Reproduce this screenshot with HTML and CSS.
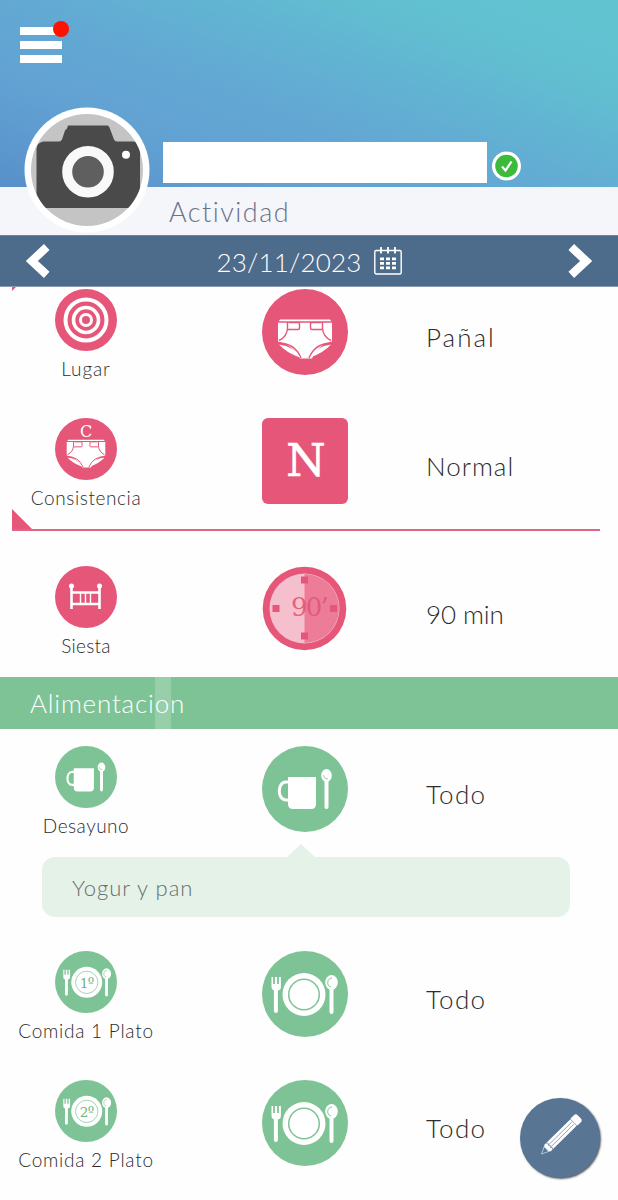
FILE: index.html
```html
<!DOCTYPE html>
<html lang="es">

<head>
  <meta charset="UTF-8">
  <meta name="viewport" content="width=device-width, initial-scale=1.0">
  <title>Actividad</title>
  <link rel="stylesheet" href="styles.css">
</head>

<body>
  <!-- shared shapes -->
  <svg width="0" height="0" class="defs">
    <symbol id="diaper" viewBox="0 0 56 42">
      <path fill="#fff" d="M3 1h50l2 3v19C45 25 39 31 35 40H23C18 31 11 25 1 23V4z" />
      <path fill="none" stroke="#e65679" stroke-width="1.4" d="M1 3.500h54M10.500 4v6Q10 18 2 22M45.500 4v6Q46 18 54 22M12 4h9q1.500 0 1.500 1.500v4Q22.500 11 21 11H11M44 4h-9q-1.500 0-1.500 1.500v4Q33.500 11 35 11h10M1 24.500q17 0 23 15M55 24.500q-17 0-23 15" />
      <path fill="#fff" d="M2 26q15 2 21 13Q9 34 2 26zM54 26q-15 2-21 13 14-5 21-13z" />
    </symbol>
    <symbol id="cup" viewBox="0 0 86 86">
      <path fill="#fff" d="M26 31h28v27q0 5-5 5H31q-5 0-5-5z" />
      <path fill="none" stroke="#fff" stroke-width="3" d="M27 36h-3c-9 0-9 18 0 18h3" />
      <ellipse cx="64.500" cy="29.500" rx="5.300" ry="6.500" fill="#fff" />
      <path stroke="#fff" stroke-width="4" stroke-linecap="round" d="M64.500 35v26" />
      <path fill="none" stroke="#7ec395" stroke-width=".8" d="M61 29q1 4 5 4" />
    </symbol>
    <symbol id="plate" viewBox="0 0 86 86">
      <circle cx="42" cy="43.500" r="21.500" fill="#fff" />
      <path fill="#fff" d="M9.500 26h1.600v7h1.800v-7h2.200v7h1.800v-7h2v10q0 3-3 3.500V60q0 2-2 2t-2-2V39.500q-2.400-.5-2.400-3.500z" />
      <ellipse cx="69.500" cy="31.500" rx="6.300" ry="7.500" fill="#fff" />
      <path stroke="#fff" stroke-width="4" stroke-linecap="round" d="M69.500 38v23" />
      <path fill="none" stroke="#7ec395" stroke-width="1" d="M70 27c-5 0-6 8-1 9" />
    </symbol>
  </svg>

  <header class="cabecera">
    <button class="menu" aria-label="Menú">
      <span></span><span></span><span></span>
      <i class="aviso"></i>
    </button>
    <div class="perfil">
      <div class="nombre"></div>
      <svg class="check" viewBox="0 0 30 30">
        <circle cx="15.500" cy="15" r="14.500" fill="#fff" />
        <circle cx="15.500" cy="15" r="11.300" fill="#3cba3a" />
        <path d="M11 15.500l3.500 4L20.500 10.500" fill="none" stroke="#fff" stroke-width="2.200" />
      </svg>
    </div>
    <svg class="avatar" viewBox="0 0 126 126">
      <clipPath id="foto"><circle cx="63" cy="63" r="56" /></clipPath>
      <circle cx="63" cy="63" r="62.500" fill="#fff" />
      <g clip-path="url(#foto)">
        <path fill="#c4c4c4" d="M0 0h126v126H0z" />
        <path fill="#4a4a4a" d="M44 18.500h40l1.500 2 4.500 12q1 2 3 2h17q6 1 6 7v59.500H12.500V42.500q0-7 7-8H35q2 0 3-2l3-9 2-2z" />
      </g>
      <circle cx="64" cy="64.800" r="20.800" fill="#5f5f5f" stroke="#f9f9f9" stroke-width="10" />
      <circle cx="102" cy="47.800" r="4" fill="#fff" />
    </svg>
  </header>

  <div class="pestana">Actividad</div>

  <nav class="fecha">
    <svg class="flecha" viewBox="0 0 23 34"><path d="M20 3L5.500 16.500 20 30" fill="none" stroke="#fff" stroke-width="8" /></svg>
    <div class="dia">
      <span>23/11/2023</span>
      <svg class="calendario" viewBox="0 0 28 28">
        <rect x=".8" y="3.500" width="26.400" height="23.500" rx="1.500" fill="none" stroke="#fff" stroke-width="1.400" />
        <path stroke="#fff" stroke-width="1.800" d="M7 0v6.500M14 0v6.500M21 0v6.500" />
        <path stroke="#fff" stroke-width="2.800" stroke-dasharray="4 2" d="M6 11.800h16M6 16.300h16M6 20.800h16" />
      </svg>
    </div>
    <svg class="flecha" viewBox="0 0 23 34"><path d="M3 3l14.500 13.500L3 30" fill="none" stroke="#fff" stroke-width="8" /></svg>
  </nav>

  <main>
    <section class="grupo">
      <i class="esquina"></i>
      <div class="fila">
        <div class="tipo">
          <svg class="icono" viewBox="0 0 62 62">
            <circle cx="31" cy="31" r="31" fill="#e65679" />
            <g fill="none" stroke="#fff">
              <circle cx="31" cy="31" r="20.500" stroke-width="4" />
              <circle cx="31" cy="31" r="12.500" stroke-width="3.600" />
              <circle cx="31" cy="31" r="5.500" stroke-width="3" />
            </g>
          </svg>
          <span class="lugar">Lugar</span>
        </div>
        <svg class="grande" viewBox="0 0 86 86">
          <circle cx="43" cy="43" r="43" fill="#e65679" />
          <use href="#diaper" x="15" y="29.500" width="56" height="42" />
        </svg>
        <div class="valor panal">Pañal</div>
      </div>
      <div class="fila">
        <div class="tipo">
          <svg class="icono" viewBox="0 0 62 62">
            <circle cx="31" cy="31" r="31" fill="#e65679" />
            <text x="31" y="19" class="letra-c">C</text>
            <use href="#diaper" x="11" y="21" width="40" height="30" />
          </svg>
          <span class="consistencia">Consistencia</span>
        </div>
        <svg class="grande" viewBox="0 0 86 86">
          <rect width="86" height="86" rx="6" fill="#e65679" />
          <text x="44" y="58" class="letra-n">N</text>
        </svg>
        <div class="valor normal">Normal</div>
      </div>
    </section>

    <section class="siesta">
      <div class="fila">
        <div class="tipo">
          <svg class="icono" viewBox="0 0 62 62">
            <circle cx="31" cy="31" r="31" fill="#e65679" />
            <path fill="none" stroke="#fff" stroke-width="2.600" d="M16.500 20v23M44.500 20v23M16 26.500h29M16 38h29" />
            <path stroke="#fff" stroke-width="1.400" d="M25.500 26v12M30.500 26v12M35.500 26v12" />
            <circle cx="16.500" cy="20" r="2.500" fill="#fff" />
            <circle cx="44.500" cy="20" r="2.500" fill="#fff" />
          </svg>
          <span class="nombre-siesta">Siesta</span>
        </div>
        <svg class="grande" viewBox="0 0 86 86">
          <circle cx="42.500" cy="42.500" r="41.800" fill="#e65679" />
          <circle cx="42.500" cy="42.500" r="35" fill="#f6bfce" />
          <path fill="#ed7c98" d="M42.500 8a34.500 34.500 0 010 69z" />
          <path fill="#e65679" d="M39 10.500h7v7h-7zM39 66.500h7v7h-7zM10.500 39h7v7h-7zM68 39h7v7h-7z" />
          <text x="29" y="50" class="minutos">90’</text>
        </svg>
        <div class="valor noventa">90 min</div>
      </div>
    </section>

    <h2 class="titulo">Alimentacion</h2>

    <section class="comidas">
      <div class="fila">
        <div class="tipo">
          <svg class="icono" viewBox="0 0 86 86">
            <circle cx="43" cy="43" r="43" fill="#7ec395" />
            <use href="#cup" width="86" height="86" />
          </svg>
          <span class="desayuno">Desayuno</span>
        </div>
        <svg class="grande" viewBox="0 0 86 86">
          <circle cx="43" cy="43" r="43" fill="#7ec395" />
          <use href="#cup" width="86" height="86" />
        </svg>
        <div class="valor todo">Todo</div>
      </div>
      <div class="nota">Yogur y pan</div>
      <div class="fila">
        <div class="tipo">
          <svg class="icono" viewBox="0 0 86 86">
            <circle cx="43" cy="43" r="43" fill="#7ec395" />
            <use href="#plate" x="2" width="86" height="86" />
            <circle cx="44" cy="43.500" r="15.500" class="borde-fino" />
            <text x="44" y="51" class="plato">1º</text>
          </svg>
          <span class="comida">Comida 1 Plato</span>
        </div>
        <svg class="grande" viewBox="0 0 86 86">
          <circle cx="43" cy="43" r="43" fill="#7ec395" />
          <use href="#plate" width="86" height="86" />
          <circle cx="42" cy="43.500" r="15.300" class="borde" />
        </svg>
        <div class="valor todo">Todo</div>
      </div>
      <div class="fila">
        <div class="tipo">
          <svg class="icono" viewBox="0 0 86 86">
            <circle cx="43" cy="43" r="43" fill="#7ec395" />
            <use href="#plate" x="2" width="86" height="86" />
            <circle cx="44" cy="43.500" r="15.500" class="borde-fino" />
            <text x="44" y="51" class="plato">2º</text>
          </svg>
          <span class="comida">Comida 2 Plato</span>
        </div>
        <svg class="grande" viewBox="0 0 86 86">
          <circle cx="43" cy="43" r="43" fill="#7ec395" />
          <use href="#plate" width="86" height="86" />
          <circle cx="42" cy="43.500" r="15.300" class="borde" />
        </svg>
        <div class="valor todo">Todo</div>
      </div>
    </section>
  </main>

  <button class="editar" aria-label="Editar">
    <svg viewBox="0 0 80 80">
      <g transform="translate(21.500 56) rotate(-44.500)">
        <path fill="#fff" d="M8.500-4.500H46v9H8.500L5 2V-2z" />
        <rect x="44" y="-5" width="9" height="10" rx="3" fill="#fff" />
        <path fill="#587593" stroke="#c9d5e0" stroke-width=".8" d="M0 0l7-3.300v6.600z" />
        <path fill="none" stroke="#587593" stroke-width=".6" d="M11-1.500h33M11 1.500h33M45-5v10M11-4.500q2.500 1.500 0 3 2.500 1.500 0 3 2.500 1.500 0 3" />
      </g>
    </svg>
  </button>
</body>

</html>
```
FILE: styles.css
```css
* {
  box-sizing: border-box;
}

body {
  margin: 0;
  height: 1200px;
  position: relative;
  overflow: hidden;
  background-color: #fefefe;
  font-family: Lato, "Open Sans", sans-serif;
  font-weight: 300;
  color: #2c2c2c;
}

svg {
  display: block;
  flex: none;
}

.defs {
  position: absolute;
}

button {
  border: none;
  padding: 0;
  background: none;
  cursor: pointer;
}

/* Cabecera */
.cabecera {
  position: relative;
  height: 187px;
  padding: 27px 20px 4px;
  display: flex;
  flex-direction: column;
  justify-content: space-between;
  background: linear-gradient(200deg, #61c3d0 0%, #61c1d0 18%, #61bbd1 28%, #62afd3 45%, #62a8d3 56%, #62a2d3 73%, #5890ca 100%);
}

.menu {
  position: relative;
  width: 42px;
  display: flex;
  flex-direction: column;
  gap: 6px;
}

.menu span {
  width: 42px;
  height: 8px;
  background-color: #fff;
}

.aviso {
  position: absolute;
  top: -6px;
  right: -7px;
  width: 16px;
  height: 16px;
  border-radius: 50%;
  background-color: #ff1200;
}

.perfil {
  display: flex;
  align-items: center;
  gap: 4px;
  padding-left: 143px;
}

.nombre {
  width: 324px;
  height: 41px;
  background-color: #fff;
}

.check {
  width: 30px;
  height: 30px;
  margin-top: 7px;
}

.avatar {
  position: absolute;
  left: 24px;
  top: 107px;
  width: 126px;
  height: 126px;
}

.pestana {
  height: 48px;
  padding-left: 169px;
  background-color: #f5f6f9;
  color: #6a718c;
  font-size: 27px;
  line-height: 49px;
  letter-spacing: 1.5px;
}

.fecha {
  height: 52px;
  padding: 0 26px;
  display: flex;
  align-items: center;
  justify-content: space-between;
  background-color: #4d6b8a;
  border-top: 1px solid #6b839b;
  border-bottom: 1px solid #8b9cae;
}

.flecha {
  width: 24px;
  height: 35px;
}

.dia {
  display: flex;
  align-items: center;
  gap: 12px;
  color: #fff;
  font-size: 26px;
  letter-spacing: 0.2px;
}

.dia span {
  padding-top: 1px;
}

.calendario {
  width: 28px;
  height: 28px;
}

/* Filas */
.fila {
  height: 129px;
  display: grid;
  grid-template-columns: 172px 254px 1fr;
  align-items: start;
}

.tipo {
  display: flex;
  flex-direction: column;
  align-items: center;
  gap: 6px;
  font-size: 19px;
  line-height: 24px;
  white-space: nowrap;
}

.lugar {
  letter-spacing: 0.9px;
}

.consistencia {
  letter-spacing: 0.6px;
}

.nombre-siesta {
  letter-spacing: 0.3px;
}

.desayuno {
  letter-spacing: 0.5px;
}

.comida {
  letter-spacing: 0.75px;
}

.icono {
  width: 62px;
  height: 62px;
}

.grande {
  width: 86px;
  height: 86px;
  margin-left: 90px;
}

.valor {
  padding-top: 33px;
  font-size: 26px;
  line-height: 30px;
}

.panal {
  letter-spacing: 2px;
}

.normal {
  letter-spacing: 1px;
}

.noventa {
  letter-spacing: -0.1px;
}

.todo {
  letter-spacing: 1.3px;
}

.grupo {
  position: relative;
  height: 244px;
  padding-top: 2px;
}

/* linea inferior con su esquina */
.grupo::after {
  content: "";
  position: absolute;
  left: 12px;
  right: 18px;
  bottom: 0;
  height: 2px;
  background-color: #dc6685;
}

.grupo::before {
  content: "";
  position: absolute;
  left: 12px;
  bottom: 1px;
  border-left: 21px solid #e65679;
  border-top: 21px solid transparent;
}

.esquina {
  position: absolute;
  left: 12px;
  top: 0;
  border-left: 4px solid #e65679;
  border-bottom: 4px solid transparent;
}

.siesta {
  height: 146px;
  padding-top: 35px;
}

.titulo {
  margin: 0;
  height: 52px;
  padding-left: 30px;
  background: linear-gradient(#96cfaa, #96cfaa) 155px 0 / 16px 100% no-repeat #7ec395;
  color: #fff;
  font-size: 26px;
  font-weight: 300;
  line-height: 53px;
  letter-spacing: 0.8px;
}

.comidas {
  padding-top: 17px;
}

.nota {
  position: relative;
  height: 60px;
  margin: -18px 48px 34px 42px;
  padding-left: 30px;
  border-radius: 13px;
  background-color: #e5f2e8;
  color: #686e6a;
  font-size: 22px;
  line-height: 61px;
  letter-spacing: 1px;
}

.nota::before {
  content: "";
  position: absolute;
  left: 245px;
  top: -13px;
  border: 14px solid transparent;
  border-top: 0;
  border-bottom: 13px solid #e5f2e8;
}

/* Textos dentro de los iconos */
.letra-c {
  fill: #fff;
  font: 16px "DejaVu Serif", serif;
  text-anchor: middle;
}

.letra-n {
  fill: #fff;
  stroke: #fff;
  stroke-width: 0.7px;
  font: 45px "DejaVu Serif", serif;
  text-anchor: middle;
}

.minutos {
  fill: #e2567a;
  font: 26px "DejaVu Serif", serif;
  letter-spacing: -1.8px;
  opacity: 0.9;
}

.plato {
  fill: #6cb985;
  font: 19px "DejaVu Serif", serif;
  text-anchor: middle;
  letter-spacing: -1px;
}

.borde {
  fill: none;
  stroke: #7ec395;
  stroke-width: 1.5px;
}

.borde-fino {
  fill: none;
  stroke: #7ec395;
  stroke-width: 1px;
}

.editar {
  position: absolute;
  left: 520px;
  top: 1098px;
  width: 80px;
  height: 80px;
  border-radius: 50%;
  background-color: #587593;
  box-shadow: 1px 1px 2px rgba(40, 50, 60, 0.8);
}
```
